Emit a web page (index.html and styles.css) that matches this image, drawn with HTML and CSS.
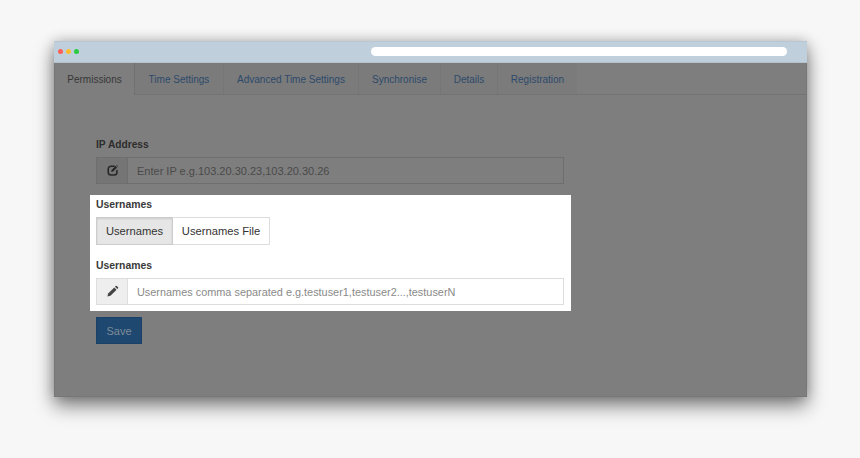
FILE: index.html
```html
<!DOCTYPE html>
<html lang="en">
<head>
<meta charset="utf-8">
<title>Permissions</title>
<link rel="stylesheet" href="styles.css">
</head>
<body>
<div class="window">
  <header class="titlebar">
    <div class="lights">
      <span class="light red"></span><span class="light amber"></span><span class="light green"></span>
    </div>
    <div class="address"></div>
  </header>
  <main class="app">
    <nav class="tabs">
      <a class="tab active">Permissions</a>
      <a class="tab t-time">Time Settings</a>
      <a class="tab t-adv">Advanced Time Settings</a>
      <a class="tab t-sync">Synchronise</a>
      <a class="tab t-det">Details</a>
      <a class="tab t-reg">Registration</a>
    </nav>
    <section class="form">
      <div class="field">
        <label class="label dim-label">IP Address</label>
        <div class="group dim-group">
          <span class="addon">
            <svg class="icon" viewBox="0 0 14 14" aria-hidden="true"><path d="M8.8 2.4H5.4A3 3 0 0 0 2.4 5.4v3.4a3 3 0 0 0 3 3h3.4a3 3 0 0 0 3-3V7" fill="none" stroke="currentColor" stroke-width="1.7" stroke-linecap="round"/><path d="M5.6 8.6 6 6.4 10.2 2.2 11.9 3.9 7.7 8.1Z" fill="currentColor"/><path d="M11 1.5 11.6 1 13 2.4 12.5 3Z" fill="currentColor"/></svg>
          </span>
          <span class="control">Enter IP e.g.103.20.30.23,103.20.30.26</span>
        </div>
      </div>
      <div class="spot">
        <label class="label">Usernames</label>
        <div class="segments">
          <button class="seg on">Usernames</button><button class="seg">Usernames File</button>
        </div>
        <label class="label second">Usernames</label>
        <div class="group">
          <span class="addon">
            <svg class="icon" viewBox="0 0 14 14" aria-hidden="true"><path d="M1.5 12.5 2.3 9.2 8.9 2.6 11.4 5.1 4.8 11.7Z" fill="currentColor"/><path d="M9.7 1.8 10.5 1a.9.9 0 0 1 1.2 0l1.3 1.3a.9.9 0 0 1 0 1.2l-.8.8Z" fill="currentColor"/></svg>
          </span>
          <span class="control wide">Usernames comma separated e.g.testuser1,testuser2...,testuserN</span>
        </div>
      </div>
      <button class="save">Save</button>
    </section>
  </main>
</div>
</body>
</html>
```
FILE: styles.css
```css
* { box-sizing: border-box; }
html, body { height: 100%; }
body {
  margin: 0;
  background: #f7f7f7;
  font-family: "Liberation Sans", Arial, sans-serif;
  font-size: 11px;
  padding: 41px 53px 0 54px;
}
.window {
  height: 356px;
  display: flex;
  flex-direction: column;
  box-shadow: 0 9px 18px rgba(0,0,0,.48), 0 0 12px rgba(0,0,0,.2);
}
.titlebar {
  height: 22px;
  flex: none;
  background: #c0cfdc;
  display: flex;
  align-items: center;
  padding: 0 20px 1px 4px;
  border-top: 1px solid #b8c7d3;
  border-bottom: 1px solid #b4c2ce;
}
.lights { display: flex; gap: 3px; width: 313px; flex: none; }
.light { width: 5px; height: 5px; border-radius: 50%; }
.red { background: #ff5f57; }
.amber { background: #ffbd2e; }
.green { background: #28ca41; }
.address { flex: 1; height: 9px; background: #fff; border-radius: 5px; }
.app {
  flex: 1;
  background: #7e7e7e;
  display: flex;
  flex-direction: column;
  border: 1px solid #777;
  border-width: 0 1px 1px 1px;
}
.tabs {
  height: 32px;
  flex: none;
  display: flex;
  font-size: 10px;
  border-bottom: 1px solid #737373;
}
.tab {
  height: 31px;
  padding-top: 1px;
  display: flex;
  align-items: center;
  justify-content: center;
  color: #2d4a6b;
  background: #7b7b7b;
  border-right: 1px solid #767676;
  white-space: nowrap;
}
.active {
  width: 80px;
  color: #383838;
  background: #7e7e7e;
  height: 32px;
  padding-top: 0;
  border-right: 1px solid #707070;
}
.t-time { width: 89px; }
.t-adv { width: 135px; }
.t-sync { width: 82px; }
.t-det { width: 57px; }
.t-reg { width: 79px; border-right: 0; }
.form { padding: 43px 0 0 41px; }
.label {
  display: block;
  font-weight: 700;
  font-size: 10.4px;
  color: #3a3a3a;
  line-height: 13px;
  margin-bottom: 6px;
}
.dim-label { color: #2d2d2d; font-size: 10.2px; }
.group {
  display: flex;
  width: 468px;
  height: 27px;
  border: 1px solid #ddd;
  background: #fff;
}
.addon {
  width: 31px;
  flex: none;
  display: flex;
  align-items: center;
  justify-content: center;
  background: #eee;
  color: #444;
  border-right: 1px solid #ddd;
}
.icon { width: 13px; height: 13px; display: block; }
.control {
  flex: 1;
  display: flex;
  align-items: center;
  padding-left: 9px;
  color: #8a8a8a;
}
.wide { font-size: 10.9px; }
.dim-group { background: #7e7e7e; border-color: #6e6e6e; }
.dim-group .addon { background: #757575; color: #272727; border-color: #6e6e6e; }
.dim-group .control { color: #4a4a4a; }
.spot {
  background: #fff;
  width: 481px;
  height: 116px;
  margin: 11px 0 6px -6px;
  padding: 3px 6px 0;
}
.segments { display: flex; }
.seg {
  height: 28px;
  padding: 0;
  font: 11.2px "Liberation Sans", Arial, sans-serif;
  color: #333;
  background: #fff;
  border: 1px solid #ddd;
  border-left: 0;
  width: 97px;
}
.seg.on {
  width: 77px;
  background: #e6e6e6;
  border: 1px solid #ccc;
  box-shadow: inset 0 1px 2px rgba(0,0,0,.12);
}
.second { margin-top: 14px; }
.save {
  width: 46px;
  height: 27px;
  padding: 0;
  background: #1e4870;
  border: 1px solid #1b4266;
  color: #7f8b97;
  font: 11px "Liberation Sans", Arial, sans-serif;
  display: block;
}
```
